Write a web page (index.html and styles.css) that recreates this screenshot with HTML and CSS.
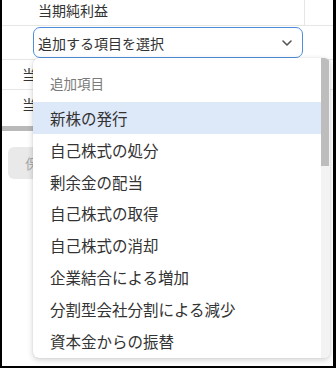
FILE: index.html
```html
<!DOCTYPE html>
<html lang="ja">
<head>
  <meta charset="UTF-8">
  <title>追加項目の選択</title>
  <link rel="stylesheet" href="styles.css">
</head>
<body>

  <div class="frame">
    <!-- Table rows -->
    <div class="row row-top">
      <div class="cell-main">当期純利益</div>
    </div>
    <div class="row row-select">
      <div class="select-box">
        <span>追加する項目を選択</span>
        <svg class="chevron" width="12" height="8" viewBox="0 0 12 8">
          <path d="M2 2 L6 6 L10 2" fill="none" stroke="#555" stroke-width="1.6" stroke-linecap="round" stroke-linejoin="round"/>
        </svg>
      </div>
    </div>
    <div class="row row-item"><div class="cell-label">当期変動額合計</div></div>
    <div class="row row-item row-last"><div class="cell-label">当期末残高</div></div>
    <div class="hscroll"><div class="hscroll-thumb"></div></div>

    <div class="actions">
      <button class="save-btn" disabled><span>保存</span></button>
    </div>

    <!-- Dropdown menu -->
    <div class="dropdown">
      <div class="menu">
        <div class="menu-header">追加項目</div>
        <div class="menu-item active">新株の発行</div>
        <div class="menu-item">自己株式の処分</div>
        <div class="menu-item">剰余金の配当</div>
        <div class="menu-item">自己株式の取得</div>
        <div class="menu-item">自己株式の消却</div>
        <div class="menu-item">企業結合による増加</div>
        <div class="menu-item">分割型会社分割による減少</div>
        <div class="menu-item">資本金からの振替</div>
      </div>
      <div class="scroll-track">
        <div class="scroll-thumb"></div>
      </div>
    </div>
  </div>

</body>
</html>
```

FILE: styles.css
```css
body {
  margin: 0;
  font-family: 'Noto Sans CJK JP', 'Noto Sans', sans-serif;
  color: #333;
  background: #fff;
}

.frame {
  position: relative;
  width: 336px;
  height: 368px;
  box-sizing: border-box;
  border-left: 2px solid #000;
  border-right: 3px solid #000;
  border-bottom: 2px solid #000;
  overflow: hidden;
}

.row {
  border-bottom: 1px solid #e6e6e6;
  font-size: 14px;
}

.row-top {
  height: 25px;
}

.cell-main {
  width: 303px;
  height: 25px;
  box-sizing: border-box;
  border-right: 1px solid #e6e6e6;
  padding-left: 36px;
  line-height: 20px;
  white-space: nowrap;
}

.row-select {
  height: 34px;
  box-sizing: border-box;
  padding-top: 1px;
}

.select-box {
  margin-left: 31px;
  width: 270px;
  height: 31px;
  box-sizing: border-box;
  border: 1px solid #4d8fdc;
  border-radius: 7px;
  padding: 0 9px 0 4px;
  display: flex;
  align-items: center;
  justify-content: space-between;
  font-size: 14px;
  line-height: 20px;
}

.row-item {
  height: 30px;
  box-sizing: border-box;
}

.cell-label {
  width: 31px;
  box-sizing: border-box;
  padding-left: 20px;
  line-height: 28px;
  white-space: nowrap;
  overflow: hidden;
}

.row-last {
  height: 32px;
  border-bottom: none;
}

.hscroll {
  margin-top: 4px;
  height: 6px;
}

.hscroll-thumb {
  width: 200px;
  height: 5px;
  background: #b9b9b9;
}

.actions {
  padding: 15px 0 0 6px;
}

.save-btn {
  width: 90px;
  height: 32px;
  border: none;
  border-radius: 6px;
  background: #e9e9e9;
  color: #a8a8a8;
  font-family: inherit;
  font-size: 14px;
  padding: 0 0 0 17px;
  text-align: left;
}

.save-btn span {
  display: block;
  width: 8px;
  overflow: hidden;
  white-space: nowrap;
}

.dropdown {
  position: absolute;
  left: 31px;
  top: 58px;
  width: 297px;
  height: 300px;
  display: flex;
  background: #fff;
  border-radius: 6px;
  box-shadow: 0 2px 6px rgba(0, 0, 0, 0.18), 0 0 1px rgba(0, 0, 0, 0.2);
  overflow: hidden;
}

.menu {
  flex: 1;
}

.menu-header {
  height: 44px;
  box-sizing: border-box;
  padding: 15px 0 0 17px;
  font-size: 13.5px;
  line-height: 20px;
  color: #7a7a7a;
}

.menu-item {
  height: 31.8px;
  box-sizing: border-box;
  padding: 5px 0 0 17px;
  font-size: 15.5px;
  line-height: 22px;
  color: #333;
  white-space: nowrap;
}

.menu-item.active {
  background: #dde8f8;
}

.scroll-track {
  width: 9px;
  background: #f3f3f3;
}

.scroll-thumb {
  width: 8px;
  height: 108px;
  background: #bdbdbd;
}
```
